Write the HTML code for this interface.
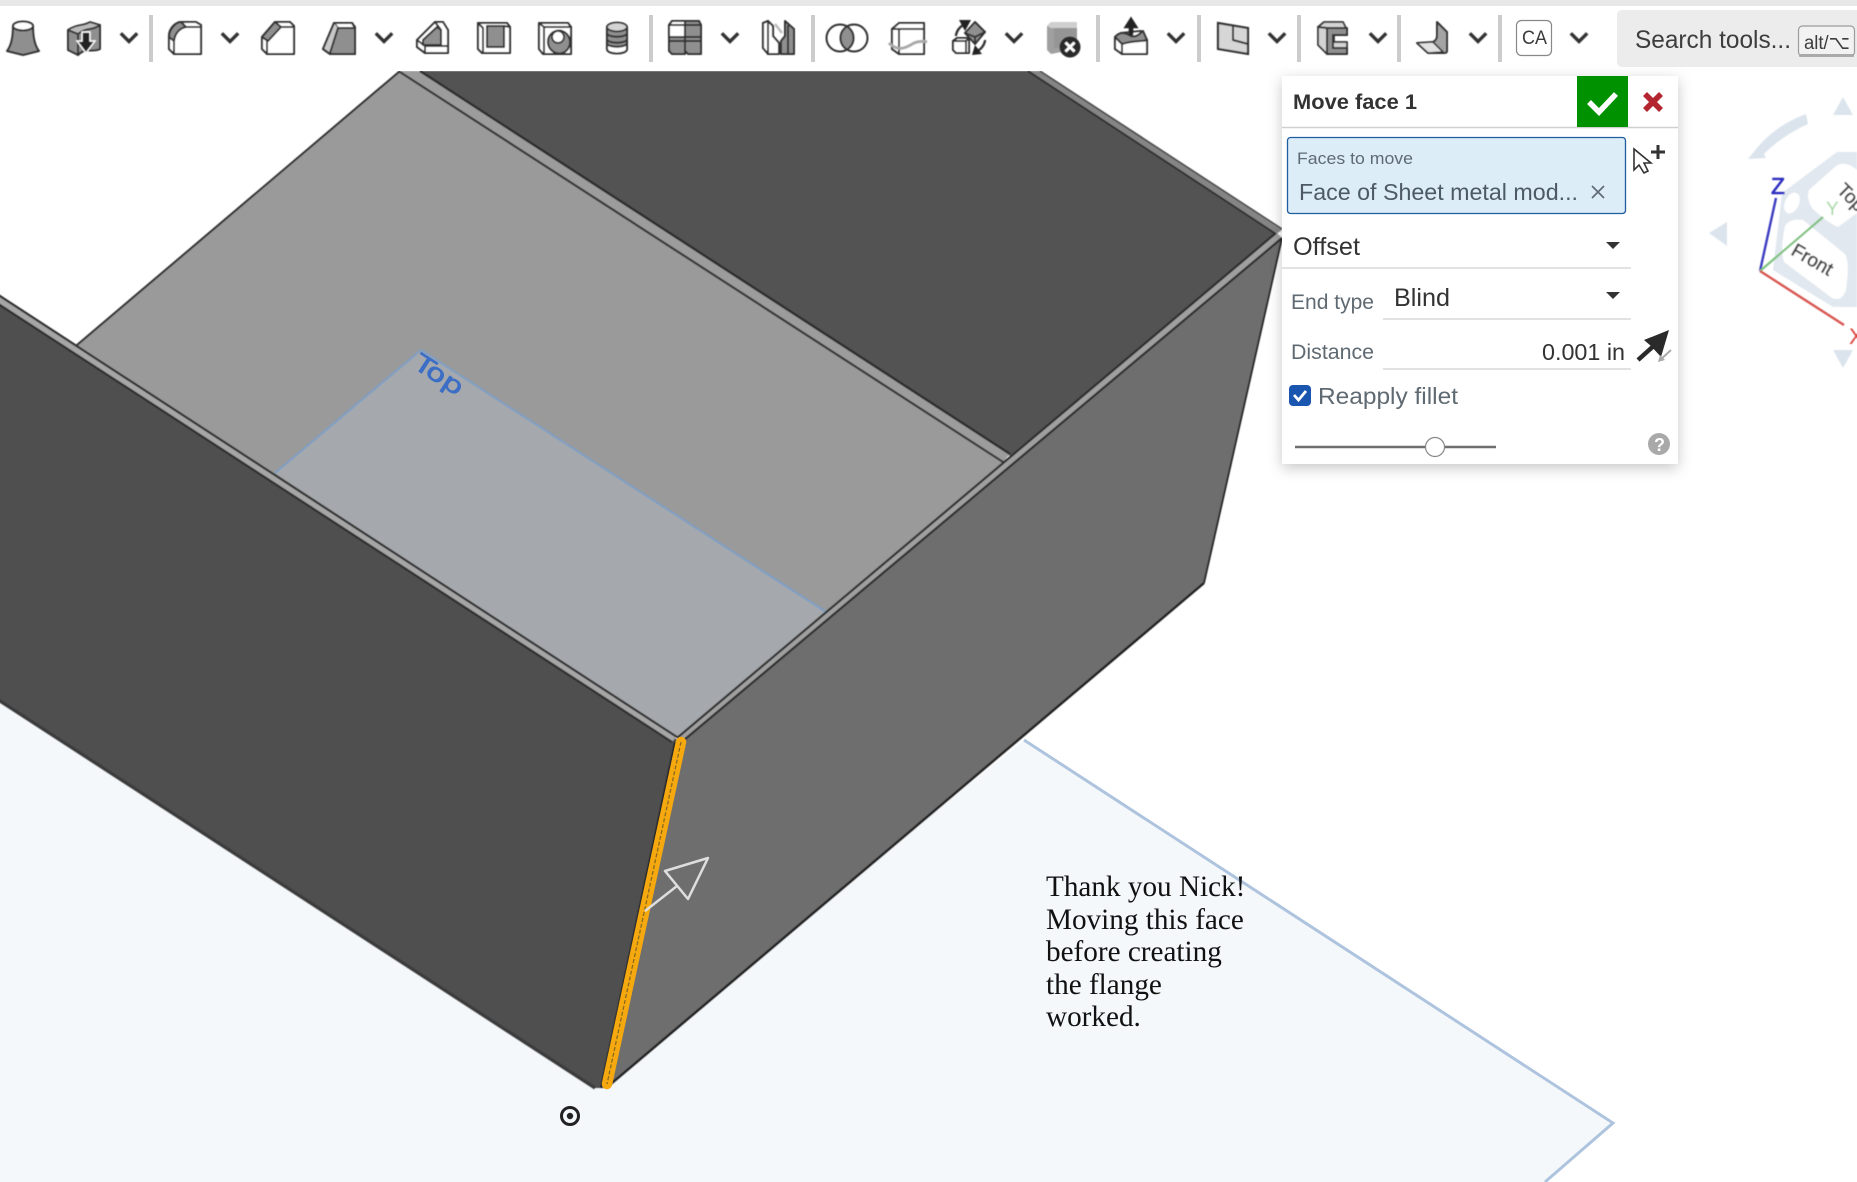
<!DOCTYPE html>
<html><head><meta charset="utf-8"><title>Move face</title>
<style>
html,body{margin:0;padding:0;background:#fff;width:1857px;height:1182px;overflow:hidden}
svg{display:block}
text{font-family:"Liberation Sans","DejaVu Sans",sans-serif}
.o{fill:none;stroke:#333;stroke-width:2;stroke-linejoin:round;stroke-linecap:round}
.w{fill:#fff;stroke:#333;stroke-width:2.1;stroke-linejoin:round}
.g{fill:#8f8f8f;stroke:#333;stroke-width:2;stroke-linejoin:round}
.l{fill:#d4d4d4;stroke:#333;stroke-width:1.8;stroke-linejoin:round}
.c{fill:none;stroke:#333;stroke-width:3.4;stroke-linecap:square;stroke-linejoin:miter}
.s{fill:#ccc}
.d{fill:#5f6a72}
</style></head>
<body>
<svg width="1857" height="1182" viewBox="0 0 1857 1182" xmlns="http://www.w3.org/2000/svg">
<defs>
<filter id="sh" x="-10%" y="-10%" width="120%" height="125%"><feDropShadow dx="0" dy="4" stdDeviation="7" flood-color="#000" flood-opacity=".22"/></filter>
<filter id="bl" x="-5%" y="-5%" width="110%" height="110%"><feGaussianBlur stdDeviation=".6"/></filter>
<filter id="b2" x="-5%" y="-5%" width="110%" height="110%"><feGaussianBlur stdDeviation=".4"/></filter>
<path id="ch" d="M-7,-3.5 L0,3.5 L7,-3.5" class="c"/>
</defs>
<rect width="1857" height="1182" fill="#fff"/>

<!-- background plane -->
<polygon points="0,700 596,1088 1024,740 1613,1123 1545,1182 0,1182" fill="#f4f8fb"/>
<polyline points="1024,740 1613,1123 1545,1182" fill="none" stroke="#aec4de" stroke-width="3"/>

<g filter="url(#b2)">
<!-- floor -->
<polygon points="400,71 1007,460 677,738 77,345" fill="#9a9a9a"/>
<polygon points="421,350 826,612 677,738 275,473" fill="#a5a9ad"/>
<polyline points="275,473 421,350 826,612" fill="none" stroke="#7f9fc4" stroke-width="2"/>
<line x1="400" y1="71" x2="77" y2="345" stroke="#2c2c2c" stroke-width="2"/>
<!-- back wall -->
<polygon points="420,71 1030,71 1278,233 1010,456" fill="#525252"/>
<polygon points="400,71 420,71 1010,454 1003,462" fill="#9c9c9c"/>
<line x1="400" y1="72" x2="1003" y2="462" stroke="#333" stroke-width="2.2"/>
<line x1="420" y1="71" x2="1010" y2="454" stroke="#2a2a2a" stroke-width="2.4"/>
<polygon points="1028,71 1040,71 1282,230 1276,234" fill="#858585"/>
<line x1="1028" y1="71" x2="1276" y2="234" stroke="#2a2a2a" stroke-width="1.8"/>
<line x1="1040" y1="71" x2="1282" y2="229" stroke="#444" stroke-width="1.6"/>
<!-- left wall -->
<polygon points="-20,292 681,742 606,1088 594,1088 -20,689" fill="#505050"/>
<polygon points="-20,283 677,736 672,742 -20,292" fill="#a6a6a6"/>
<line x1="-20" y1="283" x2="677" y2="737" stroke="#2b2b2b" stroke-width="2.2"/>
<line x1="-20" y1="292" x2="672" y2="742" stroke="#2b2b2b" stroke-width="2.2"/>
<line x1="-20" y1="688" x2="595" y2="1088" stroke="#3a3a3a" stroke-width="3.2"/>
<!-- right wall -->
<polygon points="1282,238 1204,583 606,1088 681,740" fill="#6e6e6e"/>
<polygon points="1276,232 1282,238 684,740 677,738" fill="#a0a0a0"/>
<line x1="1276" y1="233" x2="677" y2="738" stroke="#2b2b2b" stroke-width="2.2"/>
<line x1="1282" y1="238" x2="684" y2="740" stroke="#2b2b2b" stroke-width="2.2"/>
<line x1="1282" y1="238" x2="1204" y2="583" stroke="#222" stroke-width="1.8"/>
<line x1="1204" y1="583" x2="606" y2="1088" stroke="#1f1f1f" stroke-width="2.4"/>
<line x1="675" y1="742" x2="601" y2="1088" stroke="#222" stroke-width="2"/>
</g>
<!-- orange edge -->
<line x1="681" y1="742" x2="607" y2="1084" stroke="#f5a90f" stroke-width="10.5" stroke-linecap="round"/>
<line x1="681" y1="742" x2="607" y2="1084" stroke="#8a6a20" stroke-width="1.3" stroke-dasharray="4 2"/>
<!-- arrow -->
<g fill="none" stroke="#dedede" stroke-width="2.5" stroke-linejoin="round">
<line x1="645" y1="911" x2="677" y2="886"/>
<polygon points="665,871 708,858 688,899"/>
</g>
<!-- target -->
<circle cx="570" cy="1116" r="8.5" fill="none" stroke="#222" stroke-width="3"/>
<circle cx="570" cy="1116" r="3.2" fill="#222"/>
<text transform="translate(412,367) rotate(33)" font-size="24" fill="#3c6ec6" stroke="#3c6ec6" stroke-width=".7" textLength="54" lengthAdjust="spacingAndGlyphs" style="font-family:'DejaVu Sans',sans-serif">Top</text>

<!-- note -->
<g style="font-size:29.2px;fill:#111">
<text x="1046" y="896" style="font-family:'Liberation Serif',serif">Thank you Nick!</text>
<text x="1046" y="929" style="font-family:'Liberation Serif',serif">Moving this face</text>
<text x="1046" y="961" style="font-family:'Liberation Serif',serif">before creating</text>
<text x="1046" y="994" style="font-family:'Liberation Serif',serif">the flange</text>
<text x="1046" y="1026" style="font-family:'Liberation Serif',serif">worked.</text>
</g>

<!-- view cube -->
<g filter="url(#bl)">
<polygon points="1843,97 1833,115 1853,115" fill="#dbe4ec"/>
<polygon points="1709,233 1727,222 1727,246" fill="#dbe4ec"/>
<polygon points="1843,368 1833,350 1853,350" fill="#dbe4ec"/>
<path d="M1806,114 C1785,122 1768,134 1757,148 L1748,159 L1766,158 L1764,154 C1775,143 1790,132 1808,124Z" fill="#dbe4ec"/>
<path d="M1773,270 L1782,193 L1837,152 L1857,152 L1857,307 L1833,307Z" fill="#e1e8ef"/>
<path d="M1785,226 Q1790,218 1803,220 L1845,254 Q1850,262 1846,290 Q1842,302 1832,298 L1784,262 Q1780,250 1785,226Z" fill="#fff"/>
<path d="M1809,190 L1836,166 Q1845,160 1857,170 L1857,213 L1838,227 Q1826,222 1812,208 Q1806,198 1809,190Z" fill="#fff"/>
<ellipse cx="1792" cy="203" rx="7" ry="11" transform="rotate(25 1792 203)" fill="#fff"/>
<line x1="1760" y1="271" x2="1776" y2="198" stroke="#3a3ac0" stroke-width="2.4"/>
<line x1="1760" y1="271" x2="1823" y2="217" stroke="#7fc27f" stroke-width="2.2"/>
<line x1="1760" y1="271" x2="1844" y2="325" stroke="#d8554f" stroke-width="2.4"/>
<text x="1771" y="194" font-size="23" fill="#2a2ac0" stroke="#2a2ac0" stroke-width=".6">Z</text>
<text x="1826" y="215" font-size="19" fill="#a7d8a7">Y</text>
<text x="1849" y="344" font-size="22" fill="#d9403a">X</text>
<text transform="translate(1790,254) rotate(30)" font-size="19" fill="#444" stroke="#444" stroke-width=".5">Front</text>
<text transform="translate(1836,191) rotate(45)" font-size="19" fill="#444" stroke="#444" stroke-width=".5">Top</text>
</g>

<!-- toolbar -->
<rect x="0" y="0" width="1857" height="71" fill="#fff"/>
<rect x="0" y="0" width="1857" height="6" fill="#e8e8e8"/>
<g class="s">
<rect x="149" y="15" width="4" height="47"/><rect x="649" y="15" width="4" height="47"/><rect x="811" y="15" width="4" height="47"/>
<rect x="1096" y="15" width="4" height="47"/><rect x="1197" y="15" width="4" height="47"/><rect x="1297" y="15" width="4" height="47"/>
<rect x="1397" y="15" width="4" height="47"/><rect x="1498" y="15" width="4" height="47"/>
</g>
<g filter="url(#b2)">
<!-- chevrons -->
<use href="#ch" x="129" y="38"/><use href="#ch" x="230" y="38"/><use href="#ch" x="384" y="38"/><use href="#ch" x="730" y="38"/>
<use href="#ch" x="1014" y="38"/><use href="#ch" x="1176" y="38"/><use href="#ch" x="1277" y="38"/><use href="#ch" x="1378" y="38"/>
<use href="#ch" x="1478" y="38"/><use href="#ch" x="1579" y="38"/>

<!-- 1 loft -->
<g transform="translate(23,38)"><path class="g" d="M-10,-12 C-10,0 -12,8 -16,13 L0,17 L16,13 C12,8 10,0 10,-12Z"/><ellipse class="w" cx="0" cy="-12" rx="10" ry="4.5"/></g>
<!-- 2 thicken -->
<g transform="translate(84,38)"><path class="g" d="M-16,-8 L-6,-4 C2,-11 8,-7 16,-13 L16,11 C8,15 2,9 -6,17 L-16,12Z"/><path class="o" d="M-6,-4 L-6,17"/><path class="l" style="fill:#bbb" d="M-16,-8 C-8,-14 0,-12 6,-16 L16,-13 C8,-7 2,-11 -6,-4Z"/><path d="M-2,-6 L6,-6 L6,3 L11,3 L2,15 L-7,3 L-2,3Z" fill="#222" stroke="#fff" stroke-width="1.4"/></g>
<!-- 3 fillet -->
<g transform="translate(185,38)"><path class="w" d="M-16,11 L-16,-2 C-16,-10 -9,-16 -4,-16 L11,-16 L16,-13 L16,16 L-11,16Z"/><path class="g" d="M-16,-1 C-16,-9 -9,-16 -4,-16 L1,-11 C-5,-10 -10,-5 -11,3Z"/><path class="o" d="M-11,3 L-11,16 M1,-11 L16,-11"/></g>
<!-- 4 chamfer -->
<g transform="translate(278,38)"><path class="w" d="M-16,-1 L-3,-16 L12,-16 L16,-12 L16,16 L-11,16 L-16,11Z"/><path class="g" d="M-16,-1 L-3,-16 L3,-11 L-10,3Z"/><path class="o" d="M-11,3 L-11,16 M3,-11 L16,-11"/></g>
<!-- 5 draft -->
<g transform="translate(339,38)"><path class="g" d="M-16,11 L-5,-15 L13,-15 L16,-11 L16,16 L-9,16Z"/><path class="w" d="M-5,-15 L13,-15 L16,-10 L-1,-10Z"/><path d="M-16,11 L-5,-15 L-1,-10 L-10,15Z" fill="#c8c8c8"/><path class="o" d="M-1,-10 L-9,15 M-16,11 L-9,16 L16,16 M-16,11 L-5,-15"/></g>
<!-- 6 rib -->
<g transform="translate(433,38)"><path class="w" d="M-16,2 L2,-16 L10,-16 L15,-8 L15,15 L-8,15 L-16,9Z"/><path class="g" d="M-10,2 L4,-11 L8,-8 L8,7 L-10,7Z"/><path class="o" d="M-16,2 L-8,8 L-8,15 M-8,8 L15,8 M2,-16 L8,-8"/></g>
<!-- 7 shell -->
<g transform="translate(493,38)"><path class="w" d="M-15,-15 L14,-15 L17,-11 L17,15 L-11,15 L-15,11Z"/><path class="g" d="M-6,-12 L11,-12 L11,9 L-6,9Z"/><path class="o" d="M-15,-15 L-10,-10 L-10,15 M11,-12 L17,-11"/></g>
<!-- 8 hole -->
<g transform="translate(555,38)"><path class="w" d="M-16,-15 L13,-15 L16,-11 L16,16 L-12,16 L-16,11Z"/><path class="o" d="M-16,-15 L-11,-11 L16,-11 M-11,-11 L-11,16"/><ellipse class="g" cx="4" cy="4" rx="11" ry="11.5" transform="rotate(-10 4 4)"/><ellipse cx="3" cy="-1" rx="6" ry="6" fill="#fff" stroke="#333" stroke-width="1.8"/></g>
<!-- 9 thread -->
<g transform="translate(617,38)"><path class="w" d="M-10,-11 L-10,11 C-10,17 10,17 10,11 L10,-11Z"/><path class="g" d="M-10,-11 L-10,5 C-10,10 10,10 10,5 L10,-11Z"/><path class="o" d="M-10,-5 C-10,0 10,0 10,-5 M-10,1 C-10,6 10,6 10,1"/><ellipse class="l" cx="0" cy="-11" rx="10" ry="4.5"/></g>
<!-- 10 pattern -->
<g transform="translate(685,38)"><path class="w" d="M-16,-13 L-13,-17 L0,-17 L0,-1 L-16,-1Z"/><path class="g" d="M0,-17 L14,-17 L16,-13 L16,-1 L0,-1Z"/><path class="g" d="M-16,-1 L0,-1 L0,16 L-13,16 L-16,13Z"/><path class="g" d="M0,-1 L16,-1 L16,16 L3,16 L0,13Z"/><path class="o" d="M-16,-13 L16,-13 M-16,3 L16,3"/></g>
<!-- 11 mirror -->
<g transform="translate(778,38)"><path d="M-3,-14 L4,-5" stroke="#bbb" stroke-width="2.4" fill="none"/><path class="w" d="M-15,-15 L-10,-17 L-5,-12 L-5,-2 L1,5 L1,16 L-10,16 L-15,10Z"/><path class="o" d="M-10,-17 L-10,16"/><path class="g" d="M7,-17 L16,-9 L16,16 L3,16 L3,3 L7,-2Z"/><path class="o" d="M10,-12 L10,16"/></g>
<!-- 12 boolean -->
<g transform="translate(847,38)"><path d="M0,-10.5 A12.5,12.5 0 0 1 0,10.5 A12.5,12.5 0 0 1 0,-10.5Z" fill="#8f8f8f"/><circle class="o" cx="-7" cy="0" r="13.5"/><circle class="o" cx="7" cy="0" r="13.5"/></g>
<!-- 13 split -->
<g transform="translate(908,38)"><path class="w" d="M-16,-9 L-9,-15 L16,-15 L16,16 L-9,16 L-16,11Z"/><path class="o" d="M-16,-9 L-9,-9 L16,-9 M-9,-9 L-9,16"/><path d="M-19,5 C-10,14 -2,10 6,5 C11,3 15,3 19,4" fill="none" stroke="#a9a9a9" stroke-width="3"/></g>
<!-- 14 transform -->
<g transform="translate(969,38)"><path class="w" d="M-16,3 L-12,0 L0,0 L0,15 L-13,15 L-16,12Z"/><path class="o" d="M-16,3 L-3,3 L-3,15 M-3,3 L0,0"/><path class="g" d="M6,-16 L16,-6 L6,6 L-4,-5Z"/><path class="o" d="M-4,-5 L6,-1 L16,-6 M6,-1 L6,6"/><path class="o" style="stroke-width:2.4" d="M-13,-3 C-12,-8 -9,-11 -6,-13"/><polygon points="-10,-18 2,-18 -4,-7" fill="#222"/><path class="o" style="stroke-width:2.4" d="M16,3 C15,7 13,10 10,12"/><polygon points="3,17 13,16 6,7" fill="#222"/></g>
<!-- 15 delete -->
<g transform="translate(1063,38)"><path d="M-16,-12 L-12,-16 L14,-16 L14,11 L-12,16 L-16,12Z" fill="#a0a0a0"/><path d="M-16,-12 L-12,-16 L14,-16 L14,-10 L-12,-10Z" fill="#cfcfcf"/><path d="M-9,-10 L14,-10 L14,10 L-9,10Z" fill="#959595"/><circle cx="7" cy="9" r="10.5" fill="#2a2a2a"/><path d="M2.5,4.5 L11.5,13.5 M11.5,4.5 L2.5,13.5" stroke="#fff" stroke-width="2.8"/></g>
<!-- 16 extrude -->
<g transform="translate(1131,38)"><path class="w" d="M-16,-1 L-16,11 L-9,16 L16,16 L16,2 L10,-7 L-10,-5Z"/><path class="g" d="M-16,-1 C-10,-8 -4,-4 0,-2 C6,0 10,-6 12,-7 L16,2 C10,4 4,2 -9,6Z"/><path class="o" d="M-9,6 L-9,16"/><path d="M-2,-3 L-2,-10 L-7,-10 L0,-21 L7,-10 L2,-10 L2,-3Z" fill="#222" stroke="#222" stroke-width=".6"/></g>
<!-- 17 plane -->
<g transform="translate(1233,38)"><path d="M-15,-15 L15,-10 L15,16 L-15,11Z" fill="#d6d6d6" stroke="#333" stroke-width="2.2"/><path class="o" d="M0,-12 L0,2 L15,6"/></g>
<!-- 18 sheet metal -->
<g transform="translate(1333,38)"><path class="l" d="M-15,-11 L-9,-16 L10,-16 L14,-8 L14,-3 L1,-3 L1,4 L14,4 L14,16 L-6,16 L-15,7Z"/><path class="g" d="M-6,-10 L-6,16 L14,16 L14,10 L0,10 L0,-3 L14,-3 L14,-10Z"/><path class="o" d="M-15,-11 L-6,-10"/></g>
<!-- 19 flange -->
<g transform="translate(1432,38)"><path class="g" style="fill:#a4a4a4" d="M5,-16 L15,-6 L15,13 Q15,15 12,15 L-4,15 L-15,5 L1,4 Q5,2 5,-2Z"/><path d="M-15,5 L1,4 L11,14 L-4,15Z" fill="#e2e2e2" stroke="#333" stroke-width="1.6" stroke-linejoin="round"/></g>
</g>
<!-- CA -->
<rect x="1516.5" y="20.5" width="35" height="35" rx="5" fill="#fff" stroke="#888" stroke-width="1.2"/>
<text x="1522" y="44" font-size="19" fill="#3a3a3a" textLength="25" lengthAdjust="spacingAndGlyphs">CA</text>
<!-- search -->
<path d="M1623,10 L1857,10 L1857,67 L1623,67 Q1617,67 1617,61 L1617,16 Q1617,10 1623,10Z" fill="#ececec"/>
<text x="1635" y="48" font-size="25" fill="#3d3d3d" textLength="156" lengthAdjust="spacingAndGlyphs">Search tools...</text>
<rect x="1798.5" y="26" width="56" height="30" rx="4" fill="#f2f2f2" stroke="#9c9c9c" stroke-width="1.2"/>
<rect x="1799" y="54" width="55" height="3" rx="1" fill="#aaa"/>
<text x="1804" y="49" font-size="19" fill="#3d3d3d" textLength="46" lengthAdjust="spacingAndGlyphs">alt/⌥</text>

<!-- dialog -->
<rect x="1282" y="76" width="396" height="388" fill="#fff" filter="url(#sh)"/>
<line x1="1282" y1="127.5" x2="1678" y2="127.5" stroke="#d0d0d0" stroke-width="1.5"/>
<text x="1293" y="109" font-size="21" font-weight="700" fill="#333" textLength="124" lengthAdjust="spacingAndGlyphs">Move face 1</text>
<rect x="1577" y="76" width="51" height="51" fill="#009100"/>
<path d="M1589,102 L1599,112 L1616,94" fill="none" stroke="#fff" stroke-width="5.5"/>
<path d="M1645,94 L1661,110 M1661,94 L1645,110" stroke="#b3262f" stroke-width="5.6"/>

<rect x="1287.5" y="137.5" width="338" height="76" rx="3" fill="#dcedf8" stroke="#1f5d9e" stroke-width="1.3"/>
<text x="1297" y="164" font-size="17" class="d" textLength="116" lengthAdjust="spacingAndGlyphs">Faces to move</text>
<text x="1299" y="200" font-size="23" fill="#4d5a63" textLength="279" lengthAdjust="spacingAndGlyphs">Face of Sheet metal mod...</text>
<path d="M1592,186 L1604,198 M1604,186 L1592,198" stroke="#5f6a72" stroke-width="1.7"/>

<path d="M1634,149 L1634,170 L1639,165 L1644,173 L1648,171 L1644,163 L1651,163Z" fill="#fff" stroke="#333" stroke-width="1.6" stroke-linejoin="miter"/>
<path d="M1658,145 L1658,159 M1651,152 L1665,152" stroke="#333" stroke-width="3"/>

<text x="1293" y="255" font-size="25" fill="#333" textLength="67" lengthAdjust="spacingAndGlyphs">Offset</text>
<polygon points="1606,242 1620,242 1613,249" fill="#333"/>
<line x1="1282" y1="268" x2="1631" y2="268" stroke="#d0d0d0" stroke-width="1.2"/>

<text x="1291" y="309" font-size="21" class="d" textLength="83" lengthAdjust="spacingAndGlyphs">End type</text>
<text x="1394" y="306" font-size="25" fill="#333" textLength="56" lengthAdjust="spacingAndGlyphs">Blind</text>
<polygon points="1606,292 1620,292 1613,299" fill="#333"/>
<line x1="1383" y1="319" x2="1631" y2="319" stroke="#d0d0d0" stroke-width="1.2"/>

<text x="1291" y="359" font-size="21" class="d" textLength="83" lengthAdjust="spacingAndGlyphs">Distance</text>
<text x="1542" y="360" font-size="23" fill="#333" textLength="83" lengthAdjust="spacingAndGlyphs">0.001 in</text>
<line x1="1383" y1="369" x2="1631" y2="369" stroke="#d0d0d0" stroke-width="1.2"/>
<path d="M1638,360 L1658,342" stroke="#2a2a2a" stroke-width="4.5"/>
<polygon points="1669,330 1661,357 1651,346 1644,340" fill="#2a2a2a"/>
<path d="M1659,361 L1671,350" stroke="#aaa" stroke-width="2"/>
<polygon points="1658,362 1665,360 1660,355" fill="#aaa"/>

<rect x="1289" y="385" width="22" height="21" rx="4" fill="#1a56b0"/>
<path d="M1294,395 L1298.5,400 L1306,391" fill="none" stroke="#fff" stroke-width="2.8"/>
<text x="1318" y="404" font-size="23" class="d" textLength="140" lengthAdjust="spacingAndGlyphs">Reapply fillet</text>

<line x1="1295" y1="447" x2="1496" y2="447" stroke="#6f6f6f" stroke-width="2.6"/>
<circle cx="1435" cy="447" r="9.5" fill="#fff" stroke="#888" stroke-width="1.2"/>
<circle cx="1659" cy="444" r="11" fill="#a9a9a9"/>
<text x="1654" y="451" font-size="18" font-weight="700" fill="#fff">?</text>
</svg>
</body></html>
